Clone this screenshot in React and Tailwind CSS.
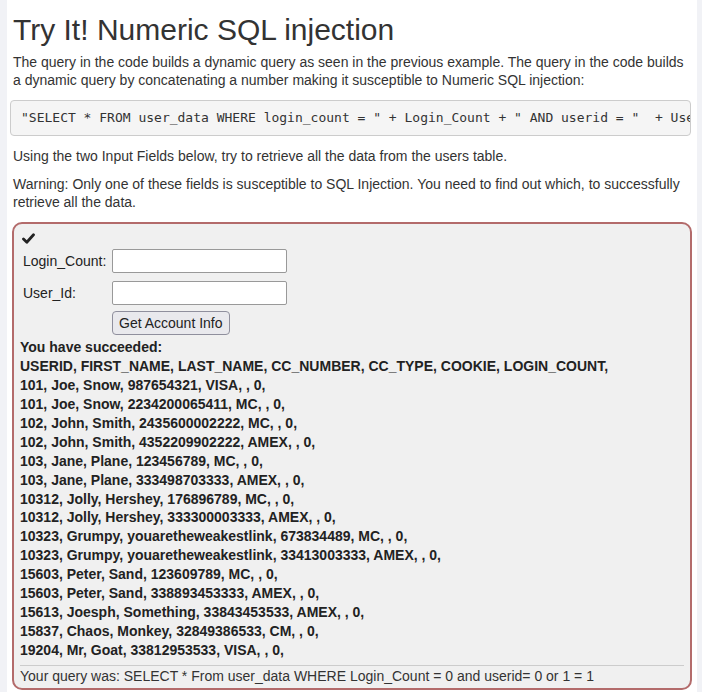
import React from 'react';

const rows = [
  '101, Joe, Snow, 987654321, VISA, , 0,',
  '101, Joe, Snow, 2234200065411, MC, , 0,',
  '102, John, Smith, 2435600002222, MC, , 0,',
  '102, John, Smith, 4352209902222, AMEX, , 0,',
  '103, Jane, Plane, 123456789, MC, , 0,',
  '103, Jane, Plane, 333498703333, AMEX, , 0,',
  '10312, Jolly, Hershey, 176896789, MC, , 0,',
  '10312, Jolly, Hershey, 333300003333, AMEX, , 0,',
  '10323, Grumpy, youaretheweakestlink, 673834489, MC, , 0,',
  '10323, Grumpy, youaretheweakestlink, 33413003333, AMEX, , 0,',
  '15603, Peter, Sand, 123609789, MC, , 0,',
  '15603, Peter, Sand, 338893453333, AMEX, , 0,',
  '15613, Joesph, Something, 33843453533, AMEX, , 0,',
  '15837, Chaos, Monkey, 32849386533, CM, , 0,',
  '19204, Mr, Goat, 33812953533, VISA, , 0,',
];

const App = () => {
  return (
    <div className="flex min-h-[692px] bg-[#f1f2f6] font-['Liberation_Sans',Arial,sans-serif] text-[#333]">
      <div className="ml-[7px] w-[690px] bg-white pl-[6px] pr-[5px] overflow-hidden">
        <h1 className="text-[30px] leading-[36px] mt-[12px] mb-[5px] font-normal">Try It! Numeric SQL injection</h1>
        <p className="text-[14px] leading-[18px]">
          The query in the code builds a dynamic query as seen in the previous example. The query in the code builds a dynamic query by concatenating a number making it susceptible to Numeric SQL injection:
        </p>
        <pre className="mt-[11px] mb-[10px] -ml-[3px] w-[681px] bg-[#f5f5f5] border border-[#ccc] rounded-[4px] px-[10px] py-[8px] text-[13px] leading-[18px] font-['DejaVu_Sans_Mono',monospace] text-[#333] overflow-hidden whitespace-pre">
          {'"SELECT * FROM user_data WHERE login_count = " + Login_Count + " AND userid = "  + User_ID'}
        </pre>
        <p className="text-[14px] leading-[20px] mb-[9px]">
          Using the two Input Fields below, try to retrieve all the data from the users table.
        </p>
        <p className="text-[14px] leading-[18px] mb-[11px]">
          Warning: Only one of these fields is susceptible to SQL Injection. You need to find out which, to successfully retrieve all the data.
        </p>
        <div className="-ml-[1px] w-[680px] border-2 border-[#b36b6b] rounded-[10px] bg-[#f0f0f0] px-[6px] pt-[3px] pb-[2px]">
          <div className="pl-[2px] h-[22px] flex items-center">
            <svg width="13" height="11" viewBox="0 0 13 11">
              <path d="M1.5 6 L4.8 9.2 L11.5 1.8" fill="none" stroke="#222" strokeWidth="2.8" strokeLinecap="round" strokeLinejoin="round" />
            </svg>
          </div>
          <div className="flex flex-col pl-[3px] text-[14px] text-[#222]">
            <div className="flex items-center">
              <span className="w-[89px]">Login_Count:</span>
              <input className="w-[175px] h-[24px] bg-white border border-[#999] rounded-[2px]" />
            </div>
            <div className="flex items-center mt-[8px]">
              <span className="w-[89px]">User_Id:</span>
              <input className="w-[175px] h-[24px] bg-white border border-[#999] rounded-[2px]" />
            </div>
            <div className="flex mt-[6px]">
              <button className="ml-[89px] h-[24px] px-[6px] bg-[#e9e9ed] border border-[#8f8f9d] rounded-[4px] text-[14px] text-[#222]">
                Get Account Info
              </button>
            </div>
          </div>
          <div className="mt-[3px] text-[14px] leading-[18.94px] font-bold text-[#222]">
            <div>You have succeeded:</div>
            <div>USERID, FIRST_NAME, LAST_NAME, CC_NUMBER, CC_TYPE, COOKIE, LOGIN_COUNT,</div>
            {rows.map((r, i) => (
              <div key={i}>{r}</div>
            ))}
          </div>
          <div className="mt-[5px] border-t border-[#ccc] text-[14px] leading-[20px] text-[#333]">
            Your query was: SELECT * From user_data WHERE Login_Count = 0 and userid= 0 or 1 = 1
          </div>
        </div>
      </div>
    </div>
  );
};

export default App;
